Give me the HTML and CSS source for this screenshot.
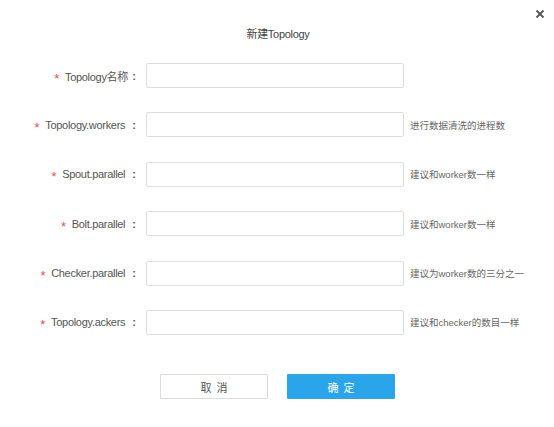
FILE: index.html
```html
<!DOCTYPE html>
<html lang="zh-CN">
<head>
<meta charset="utf-8">
<title>新建Topology</title>
<link rel="stylesheet" href="styles.css">
</head>
<body>
<div class="dialog">
  <span class="close">
    <svg width="10" height="10" viewBox="0 0 10 10"><path d="M1.5 1.5 L8.5 8.5 M8.5 1.5 L1.5 8.5" stroke="#555" stroke-width="1.8" stroke-linecap="butt"/></svg>
  </span>
  <div class="title">新建Topology</div>
  <div class="form">
    <label class="label"><span class="req">*</span>Topology名称<span class="colon">:</span></label>
    <input class="input" type="text">
    <span class="hint"></span>

    <label class="label"><span class="req">*</span>Topology.workers <span class="colon">:</span></label>
    <input class="input" type="text">
    <span class="hint">进行数据清洗的进程数</span>

    <label class="label"><span class="req">*</span>Spout.parallel <span class="colon">:</span></label>
    <input class="input" type="text">
    <span class="hint">建议和worker数一样</span>

    <label class="label"><span class="req">*</span>Bolt.parallel <span class="colon">:</span></label>
    <input class="input" type="text">
    <span class="hint">建议和worker数一样</span>

    <label class="label"><span class="req">*</span>Checker.parallel <span class="colon">:</span></label>
    <input class="input" type="text">
    <span class="hint">建议为worker数的三分之一</span>

    <label class="label"><span class="req">*</span>Topology.ackers <span class="colon">:</span></label>
    <input class="input" type="text">
    <span class="hint">建议和checker的数目一样</span>
  </div>
  <div class="actions">
    <button class="btn btn-cancel">取消</button>
    <button class="btn btn-ok">确定</button>
  </div>
</div>
</body>
</html>
```
FILE: styles.css
```css
html, body {
  margin: 0;
  padding: 0;
  background: #fff;
}
body {
  font-family: "Liberation Sans", "Noto Sans CJK SC", sans-serif;
  color: #555;
}
.dialog {
  position: relative;
  width: 554px;
  height: 427px;
  padding-top: 27px;
  box-sizing: border-box;
}
.close {
  position: absolute;
  left: 535px;
  top: 9px;
  width: 10px;
  height: 10px;
  display: block;
}
.close svg { display: block; }
.title {
  text-align: center;
  font-size: 11px;
  line-height: 14px;
  letter-spacing: -0.3px;
  color: #444;
  padding-left: 2px;
}
.form {
  margin-top: 22px;
  display: grid;
  grid-template-columns: 140px 258px auto;
  grid-auto-rows: 25px;
  column-gap: 6px;
  row-gap: 24.4px;
  align-items: center;
}
.label {
  display: flex;
  justify-content: flex-end;
  align-items: center;
  height: 25px;
  font-size: 11px;
  letter-spacing: -0.3px;
  color: #555;
  white-space: pre;
}
.colon {
  width: 12px;
  text-align: center;
  font-weight: bold;
  letter-spacing: 0;
}
.req {
  color: #f04a4a;
  font-size: 13px;
  line-height: 1;
  margin-right: 6px;
  padding-top: 5px;
}
.input {
  box-sizing: border-box;
  width: 258px;
  height: 25px;
  margin: 0;
  border: 1px solid #dedede;
  border-radius: 2px;
  padding: 0 6px;
  background: #fff;
  outline: none;
}
.hint {
  font-size: 9.5px;
  color: #666;
  white-space: nowrap;
}
.actions {
  margin-top: 39.5px;
  display: flex;
  justify-content: center;
  gap: 19px;
  padding-left: 1px;
}
.btn {
  box-sizing: border-box;
  width: 108px;
  height: 25px;
  margin: 0;
  font-family: "Liberation Sans", "Noto Sans CJK SC", sans-serif;
  font-size: 11px;
  letter-spacing: 5px;
  text-indent: 5px;
  border-radius: 1px;
  cursor: pointer;
  padding: 0;
}
.btn-cancel {
  background: #fff;
  border: 1px solid #dcdcdc;
  color: #555;
}
.btn-ok {
  background: #2aa5ea;
  border: 1px solid #2aa5ea;
  color: #fff;
}
```
